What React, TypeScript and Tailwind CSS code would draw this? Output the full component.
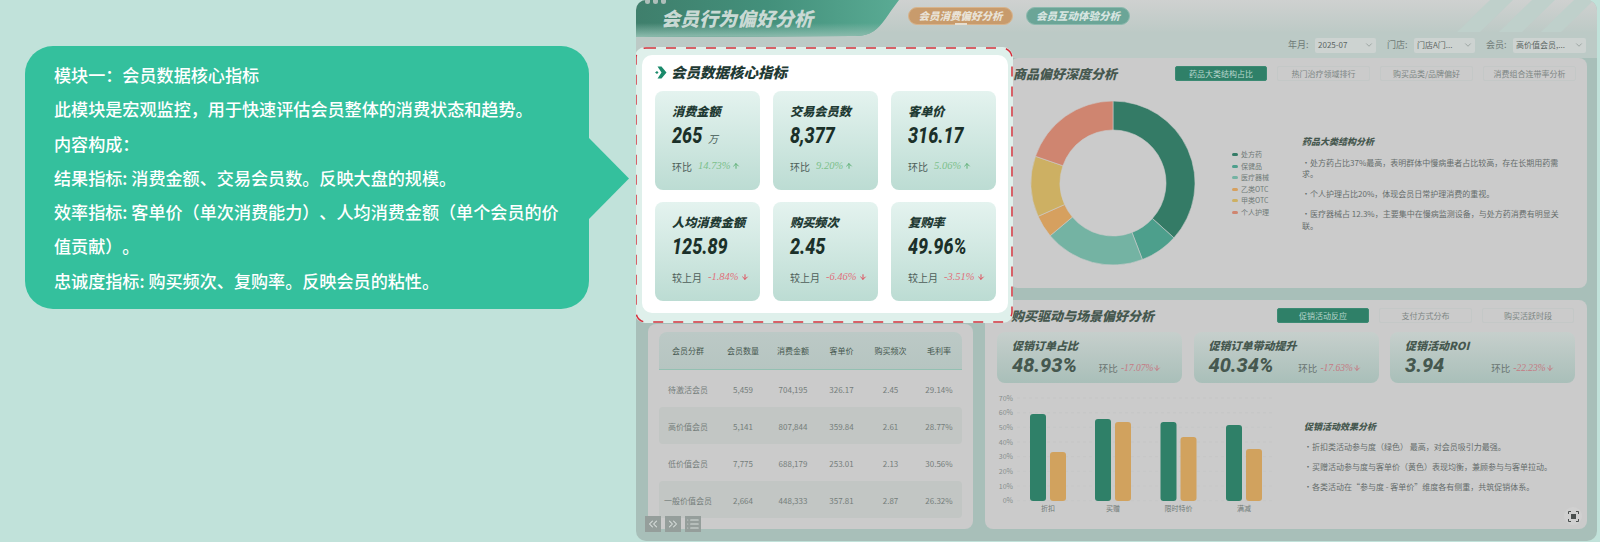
import { ArrowDown, ArrowUp, ChevronDown, ChevronsLeft, ChevronsRight, List } from 'lucide-react';

const CJK = "font-['Noto_Sans_CJK_SC','Noto_Sans',sans-serif]";
const TITLE = "font-['Noto_Sans_CJK_SC',sans-serif] font-black italic";
const NUM = "font-['Roboto',sans-serif] font-extrabold italic";

const metrics = [
  { label: '消费金额', value: '265', unit: '万', cmp: '环比', delta: '14.73%', up: true },
  { label: '交易会员数', value: '8,377', cmp: '环比', delta: '9.20%', up: true },
  { label: '客单价', value: '316.17', cmp: '环比', delta: '5.06%', up: true },
  { label: '人均消费金额', value: '125.89', cmp: '较上月', delta: '-1.84%', up: false },
  { label: '购买频次', value: '2.45', cmp: '较上月', delta: '-6.46%', up: false },
  { label: '复购率', value: '49.96%', cmp: '较上月', delta: '-3.51%', up: false },
];

const tableHead = ['会员分群', '会员数量', '消费金额', '客单价', '购买频次', '毛利率'];
const tableRows = [
  ['待激活会员', '5,459', '704,195', '326.17', '2.45', '29.14%'],
  ['高价值会员', '5,141', '807,844', '359.84', '2.61', '28.77%'],
  ['低价值会员', '7,775', '688,179', '253.01', '2.13', '30.56%'],
  ['一般价值会员', '2,664', '448,333', '357.81', '2.87', '26.32%'],
];

const legend = [
  { name: '处方药', cls: 'bg-[#347b66]' },
  { name: '保健品', cls: 'bg-[#4d9f8c]' },
  { name: '医疗器械', cls: 'bg-[#74b3a3]' },
  { name: '乙类OTC', cls: 'bg-[#d6a05f]' },
  { name: '甲类OTC', cls: 'bg-[#cdb063]' },
  { name: '个人护理', cls: 'bg-[#cf8570]' },
];

const promos = [
  { label: '促销订单占比', value: '48.93%', delta: '-17.07%', gap: 'ml-[22px]' },
  { label: '促销订单带动提升', value: '40.34%', delta: '-17.63%', gap: 'ml-[25px]' },
  { label: '促销活动ROI', value: '3.94', delta: '-22.23%', gap: 'ml-[47px]' },
];

function Tab({ label, active, w }: { label: string; active?: boolean; w: string }) {
  return (
    <div
      className={`h-[15px] ${w} rounded-[2px] flex items-center justify-center text-[8px] border ${
        active ? 'bg-[#2f8068] border-[#3c8a73] text-[#b9d6cd]' : 'border-[#c4c8c7] text-[#7d8684]'
      }`}
    >
      {label}
    </div>
  );
}

function Select({ label, value, w }: { label: string; value: string; w: string }) {
  return (
    <div className="flex items-center gap-[7px]">
      <span className="w-[20px] text-[9px] whitespace-nowrap">{label}</span>
      <div className={`h-[15px] ${w} rounded-[2px] bg-[#cdd3d1] flex items-center justify-between pl-[3px] pr-[2px]`}>
        <span className="whitespace-nowrap text-[#5c6663]">{value}</span>
        <ChevronDown size={10} strokeWidth={1.2} />
      </div>
    </div>
  );
}

function Donut() {
  const segs = [
    { from: 0, to: 132, c: '#347b66' },
    { from: 132, to: 159, c: '#4d9f8c' },
    { from: 159, to: 230, c: '#74b3a3' },
    { from: 230, to: 246, c: '#d6a05f' },
    { from: 246, to: 289, c: '#cdb063' },
    { from: 289, to: 360, c: '#cf8570' },
  ];
  const pt = (r: number, a: number) => {
    const t = ((a - 90) * Math.PI) / 180;
    return `${(84 + r * Math.cos(t)).toFixed(2)} ${(84 + r * Math.sin(t)).toFixed(2)}`;
  };
  return (
    <svg width="168" height="168" viewBox="0 0 168 168">
      {segs.map((s) => {
        const large = s.to - s.from > 180 ? 1 : 0;
        return (
          <path
            key={s.from}
            d={`M${pt(82, s.from)} A82 82 0 ${large} 1 ${pt(82, s.to)} L${pt(53, s.to)} A53 53 0 ${large} 0 ${pt(53, s.from)} Z`}
            fill={s.c}
            stroke="#cbcbcb"
            strokeWidth="0.6"
          />
        );
      })}
    </svg>
  );
}

function BarChart() {
  const ticks = [70, 60, 50, 40, 30, 20, 10, 0];
  const groups = [
    { name: '折扣', x: 1029, a: 414, b: 452 },
    { name: '买赠', x: 1094, a: 419, b: 422 },
    { name: '限时特价', x: 1159.5, a: 422, b: 437 },
    { name: '满减', x: 1225, a: 425, b: 449 },
  ];
  const ox = 996;
  const oy = 390;
  return (
    <svg width="280" height="128" viewBox="0 0 280 128" className="shrink-0 font-['Noto_Sans_CJK_SC',sans-serif]">
      {ticks.map((t, i) => {
        const y = 398 + i * 14.67 - oy;
        return (
          <g key={t}>
            <text x="16" y={y + 2.5} fontSize="7" fill="#868e8c" textAnchor="end">
              {t}%
            </text>
            <line x1="20" x2="278" y1={y} y2={y} stroke="#c2c5c4" strokeWidth="0.6" strokeDasharray="3 3" />
          </g>
        );
      })}
      {groups.map((g) => (
        <g key={g.name}>
          <rect x={g.x - ox} y={g.a - oy} width="16" height={501 - g.a} rx="3" fill="#2f8068" />
          <rect x={g.x + 20 - ox} y={g.b - oy} width="16" height={501 - g.b} rx="3" fill="#d1a25e" />
          <text x={g.x + 18 - ox} y="121" fontSize="7" fill="#6f7a77" textAnchor="middle">
            {g.name}
          </text>
        </g>
      ))}
    </svg>
  );
}

export default function App() {
  return (
    <div className={`relative w-[1600px] h-[542px] overflow-hidden flex bg-[#c1e2da] [text-spacing-trim:space-all] ${CJK}`}>
      {/* explanation bubble */}
      <div className="w-[636px] shrink-0 pl-[25px] pt-[46px]">
        <div className="relative w-[564px] h-[263px] rounded-[28px] bg-[#34c09d] pl-[29px] pt-[12px] pr-[26px] text-white text-[17.1px] leading-[34.3px] font-medium">
          <p>模块一：会员数据核心指标</p>
          <p>此模块是宏观监控，用于快速评估会员整体的消费状态和趋势。</p>
          <p>内容构成：</p>
          <p>结果指标: 消费金额、交易会员数。反映大盘的规模。</p>
          <p>效率指标: 客单价（单次消费能力）、人均消费金额（单个会员的价值贡献）。</p>
          <p>忠诚度指标: 购买频次、复购率。反映会员的粘性。</p>
          <div className="absolute left-[563px] top-[91px] w-[41px] h-[83px] bg-[#34c09d] [clip-path:polygon(0_0,100%_50%,0_100%)]" />
        </div>
      </div>

      {/* dimmed dashboard */}
      <div className="relative w-[961px] h-[541px] rounded-b-[10px] rounded-t-[10px] bg-[#a8bfb9] flex flex-col overflow-hidden">
        <div className="relative h-[32px] shrink-0 flex items-start bg-gradient-to-b from-[#cfd1d0] to-[#bdcac6]">
          <svg width="140" height="32" viewBox="0 0 140 32" className="absolute right-0 top-0">
            <path d="M0 32 L33 0 H56 L23 32 Z" fill="#bfd0cb" />
            <path d="M42 32 L75 0 H98 L65 32 Z" fill="#bfd0cb" />
            <path d="M84 32 L117 0 H137 L104 32 Z" fill="#bfd0cb" />
          </svg>
          <div className="relative w-[263px] h-[37px] shrink-0 bg-gradient-to-r from-[#3f7f6c] via-[#43907b] to-[#5aab94] [clip-path:path('M0_0_H263_C252_14_246_26_238_31_C232_35_226_36_216_36_L0_37_Z')] pl-[25px] flex items-center">
            <div className="absolute inset-x-0 bottom-0 h-[14px] bg-gradient-to-t from-[#8dbcae] to-transparent" />
            <div className="absolute left-[9px] top-0 flex gap-[3px]">
              <span className="w-[5px] h-[4px] rounded-b-full bg-[#aebfba]" />
              <span className="w-[5px] h-[4px] rounded-b-full bg-[#aebfba]" />
              <span className="w-[5px] h-[4px] rounded-b-full bg-[#aebfba]" />
            </div>
            <span className={`relative ${TITLE} text-[19px] text-[#c9d9d4]`}>会员行为偏好分析</span>
          </div>
          <div className="relative flex gap-[13px] pl-[9px] pt-[7px]">
            <div className="relative w-[105px] h-[18px] rounded-full bg-[#c89b6c] border border-[#d8b48c] flex items-center justify-center text-[#e9e2d6] text-[10.5px] font-black italic">
              会员消费偏好分析
              <span className="absolute left-[46px] bottom-[-1px] w-[12px] h-[2px] bg-[#e6ded0]" />
            </div>
            <div className="w-[104px] h-[18px] rounded-full bg-[#6ba597] border border-[#8cbaae] flex items-center justify-center text-[#d6e4e0] text-[10.5px] font-black italic">
              会员互动体验分析
            </div>
          </div>
        </div>

        <div className="h-[26px] shrink-0 flex items-center justify-end gap-[11px] pr-[11px] text-[8px] text-[#6f7a77] bg-[#bccac6]">
          <Select label="年月:" value="2025-07" w="w-[61px]" />
          <Select label="门店:" value="门店A门..." w="w-[61px]" />
          <Select label="会员:" value="高价值会员,..." w="w-[73px]" />
        </div>

        <div className="flex-1 flex gap-[12px] pl-[12px] pr-[11px]">
          <div className="w-[325px] shrink-0 flex flex-col justify-end pb-[12px]">
            <div className="relative h-[205px] rounded-[8px] bg-[#cbcbcb] px-[11px] pt-[8px]">
              <div className="h-[38px] rounded-t-[8px] bg-gradient-to-b from-[#bcc9c6] to-[#b6c5c1] border-b border-[#94c0b2] grid grid-cols-[58px_52px_48px_49px_49px_48px] items-center text-center text-[8px] text-[#46584f]">
                {tableHead.map((h) => (
                  <span key={h}>{h}</span>
                ))}
              </div>
              {tableRows.map((row, i) => (
                <div
                  key={row[0]}
                  className={`h-[37px] pt-[2px] grid grid-cols-[58px_52px_48px_49px_49px_48px] items-center text-center text-[8px] text-[#757e7b] ${
                    i % 2 === 1 ? 'bg-[#c2c6c4] rounded-[4px]' : ''
                  }`}
                >
                  {row.map((c) => (
                    <span key={c} className="whitespace-nowrap">
                      {c}
                    </span>
                  ))}
                </div>
              ))}
            </div>
          </div>

          <div className="w-[602px] shrink-0 flex flex-col gap-[12px] pb-[12px]">
            {/* drug preference */}
            <div className="h-[230px] shrink-0 rounded-[8px] bg-[#cbcbcb] ml-[25px] relative">
              <div className="flex items-center h-[30px] pt-[1px] pl-[3px] pr-[11px] justify-between">
                <span className={`${TITLE} text-[13px] text-[#46584f]`}>商品偏好深度分析</span>
                <div className="flex gap-[10px]">
                  <Tab label="药品大类结构占比" active w="w-[92px]" />
                  <Tab label="热门治疗领域排行" w="w-[93px]" />
                  <Tab label="购买品类/品牌偏好" w="w-[93px]" />
                  <Tab label="消费组合连带率分析" w="w-[93px]" />
                </div>
              </div>
              <div className="flex items-center h-[200px]">
                <div className="ml-[19px] shrink-0 mt-[-11px]">
                  <Donut />
                </div>
                <div className="ml-[35px] w-[40px] shrink-0 flex flex-col text-[7px] text-[#6f7a77] leading-[11.5px] mt-[-9px]">
                  {legend.map((l) => (
                    <div key={l.name} className="flex items-center gap-[3px] whitespace-nowrap">
                      <span className={`w-[6px] h-[3px] rounded-full ${l.cls}`} />
                      {l.name}
                    </div>
                  ))}
                </div>
                <div className="ml-[30px] w-[261px] shrink-0 text-[8px] leading-[11.5px] text-[#666d6b] mt-[-9px]">
                  <div className={`${TITLE} text-[9px] text-[#46584f] mb-[9px]`}>药品大类结构分析</div>
                  <p className="mb-[8px]">・处方药占比37%最高，表明群体中慢病患者占比较高，存在长期用药需求。</p>
                  <p className="mb-[9px]">・个人护理占比20%，体现会员日常护理消费的重视。</p>
                  <p>・医疗器械占 12.3%，主要集中在慢病监测设备，与处方药消费有明显关联。</p>
                </div>
              </div>
            </div>

            {/* purchase drivers */}
            <div className="relative flex-1 rounded-[8px] bg-[#cbcbcb] px-[12px] pt-[8px]">
              <div className="flex items-center justify-between h-[15px] pl-[14px]">
                <span className={`${TITLE} text-[13px] text-[#46584f]`}>购买驱动与场景偏好分析</span>
                <div className="flex gap-[10px] pr-[1px]">
                  <Tab label="促销活动反应" active w="w-[92px]" />
                  <Tab label="支付方式分布" w="w-[93px]" />
                  <Tab label="购买活跃时段" w="w-[92px]" />
                </div>
              </div>
              <div className="flex gap-[11.5px] mt-[9px]">
                {promos.map((p) => (
                  <div key={p.label} className="w-[185px] h-[51px] rounded-[8px] bg-gradient-to-b from-[#c6cfcc] to-[#a9bfb9] pl-[15px] pt-[5px]">
                    <div className={`${TITLE} text-[11px] leading-[16px] text-[#46584f]`}>{p.label}</div>
                    <div className="flex items-end">
                      <span className={`${NUM} text-[20px] leading-[24px] text-[#46584f]`}>{p.value}</span>
                      <span className={`${p.gap} text-[9.5px] leading-[18px] text-[#697370]`}>环比</span>
                      <span className="ml-[3px] font-['Liberation_Serif',serif] italic text-[9.5px] leading-[18px] text-[#c47a83]">
                        {p.delta}
                      </span>
                      <ArrowDown size={8} strokeWidth={3} className="text-[#c47a83] mb-[5px]" />
                    </div>
                  </div>
                ))}
              </div>
              <div className="flex mt-[7px]">
                <BarChart />
                <div className="ml-[27px] mt-[27px] text-[8px] text-[#666d6b] leading-[20px] whitespace-nowrap">
                  <div className={`${TITLE} text-[9px] text-[#46584f]`}>促销活动效果分析</div>
                  <p>・折扣类活动参与度（绿色） 最高，对会员吸引力最强。</p>
                  <p>・买赠活动参与度与客单价（黄色）表现均衡，兼顾参与与客单拉动。</p>
                  <p>・各类活动在“参与度 - 客单价”维度各有侧重，共筑促销体系。</p>
                </div>
              </div>
              {/* fullscreen button */}
              <div className="absolute right-[5px] bottom-[4px] w-[18px] h-[18px] rounded-full bg-[#d0d0d0] flex items-center justify-center">
                <svg width="11" height="11" viewBox="0 0 11 11" fill="none" stroke="#4a4f4e" strokeWidth="1">
                  <path d="M0.5 3 V0.5 H3 M8 0.5 H10.5 V3 M10.5 8 V10.5 H8 M3 10.5 H0.5 V8" />
                  <rect x="3" y="3" width="5" height="5" fill="#4a4f4e" stroke="none" />
                </svg>
              </div>
            </div>
          </div>
        </div>

        {/* page controls */}
        <div className="absolute left-[9px] top-[516px] flex gap-[4px]">
          {[ChevronsLeft, ChevronsRight, List].map((Icon, i) => (
            <div key={i} className="w-[16px] h-[16px] bg-[#959e9b] flex items-center justify-center text-[#d8dedc]">
              <Icon size={14} strokeWidth={1.8} />
            </div>
          ))}
        </div>

        {/* highlighted core metrics */}
        <div className="absolute left-[-1px] top-[47px] w-[378px] h-[276px] rounded-[10px] bg-[#dff0eb] pl-[7px] pt-[8px]">
          <svg width="378" height="276" viewBox="0 0 378 276" fill="none" className="absolute left-0 top-0">
            <rect x="1" y="1" width="376" height="274" rx="10" stroke="#d5303d" strokeWidth="1.5" strokeDasharray="10 10" />
          </svg>
          <div className="relative w-[366px] h-[258px] rounded-[10px] bg-white pl-[13px] pr-[11px] pt-[9px]">
            <div className="flex items-center gap-[4px] h-[16px]">
              <svg width="12" height="13" viewBox="0 0 12 13" className="shrink-0">
                <path d="M0 6.5 L2 5 L3.5 6.5 L2 8 Z" fill="#1b8a6b" />
                <path d="M2.5 0.5 H6.5 L11.5 6.5 L6.5 12.5 H2.5 L6.5 6.5 Z" fill="#1b8a6b" />
              </svg>
              <span className={`${TITLE} text-[14.5px] text-[#1f3a33]`}>会员数据核心指标</span>
            </div>
            <div className="grid grid-cols-3 gap-x-[13px] gap-y-[12px] mt-[11px] w-[341px]">
              {metrics.map((m) => (
                <div key={m.label} className="h-[99px] rounded-[8px] bg-gradient-to-b from-[#e4f3ef] to-[#bcdcd3] pl-[17px] pt-[11px]">
                  <div className={`${TITLE} text-[12.2px] leading-[18px] text-[#1f3a33]`}>{m.label}</div>
                  <div className="flex items-baseline h-[30px] mt-[1px]">
                    <span className={`${NUM} inline-block origin-left scale-x-[0.82] text-[22px] leading-[30px] text-[#1b3029]`}>{m.value}</span>
                    {m.unit && <span className="-ml-[1px] text-[10px] italic text-[#3f5650]">{m.unit}</span>}
                  </div>
                  <div className="flex items-center mt-[8px] h-[14px] text-[10px]">
                    <span className="text-[#4e5e59]">{m.cmp}</span>
                    <span
                      className={`ml-[6px] font-['Liberation_Serif',serif] italic text-[10.5px] ${
                        m.up ? 'text-[#7cc08b]' : 'text-[#e0707b]'
                      }`}
                    >
                      {m.delta}
                    </span>
                    {m.up ? (
                      <ArrowUp size={8} strokeWidth={3} className="ml-[2px] text-[#5fb077]" />
                    ) : (
                      <ArrowDown size={8} strokeWidth={3} className="ml-[2px] text-[#e04f5c]" />
                    )}
                  </div>
                </div>
              ))}
            </div>
          </div>
        </div>
      </div>
    </div>
  );
}
